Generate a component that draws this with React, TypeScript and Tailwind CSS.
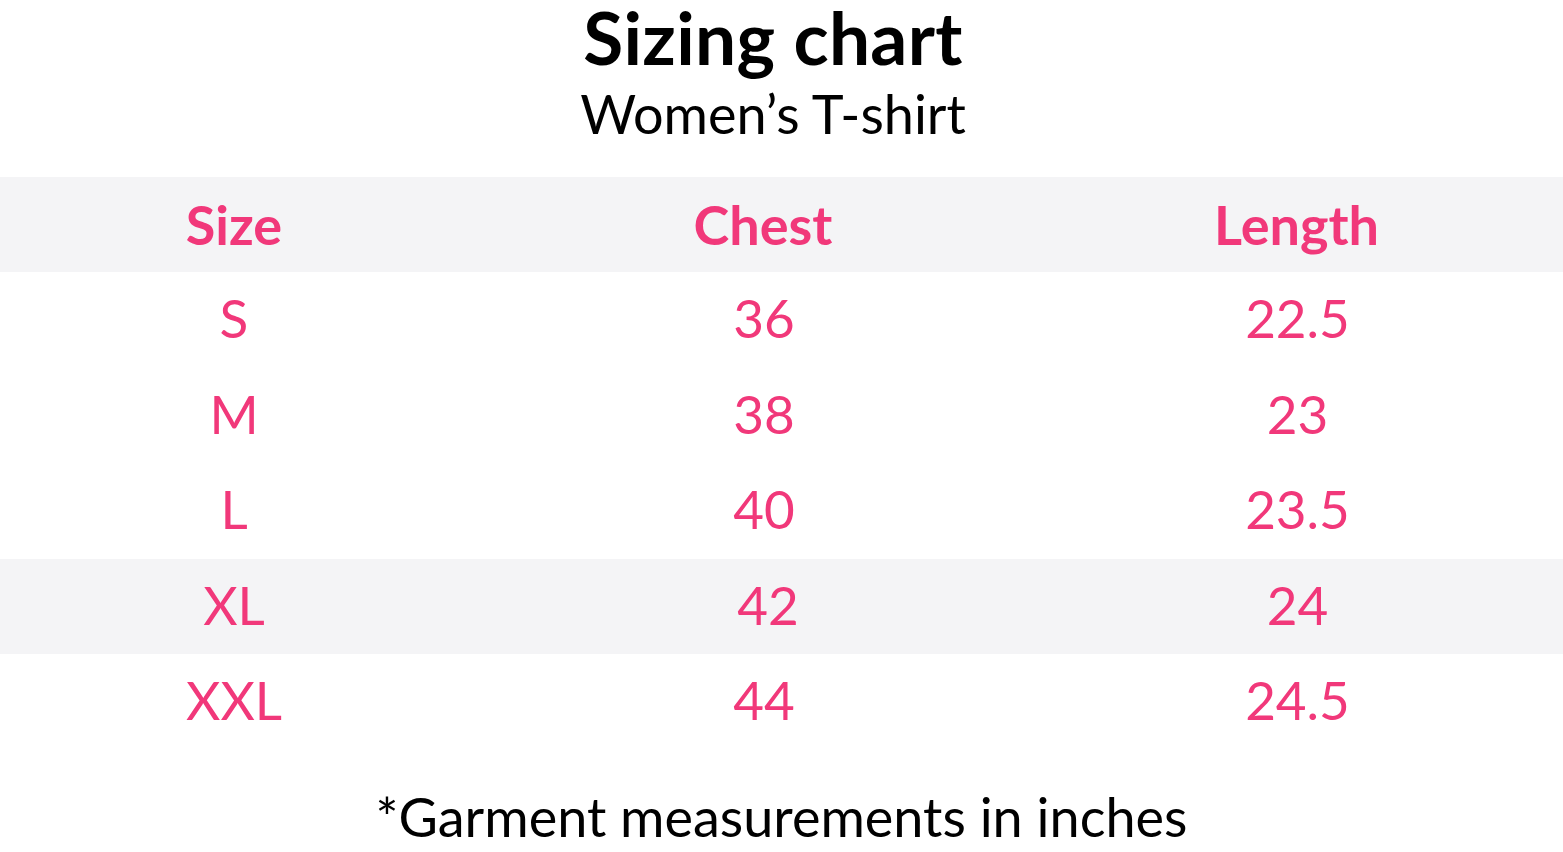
const rows = [
  ['S', '36', '22.5'],
  ['M', '38', '23'],
  ['L', '40', '23.5'],
  ['XL', '42', '24'],
  ['XXL', '44', '24.5'],
];

export default function App() {
  return (
    <div className="w-[1563px] h-[852px] bg-white text-black overflow-hidden" style={{ fontFamily: 'Lato, "Open Sans", sans-serif' }}>
      <div className="flex flex-col items-center pt-[2px] pr-[17px]">
        <h1 className="text-[73px] font-bold leading-[70px] tracking-[0.3px]">Sizing chart</h1>
        <p className="text-[54px] leading-[60px] mt-[12px]">Women’s T-shirt</p>
      </div>
      <div className="mt-[33px] text-[#f1387a]">
        <div className="grid grid-cols-[468px_590px_1fr] h-[95px] items-center bg-[#f4f4f6] text-[54px] font-bold">
          <div className="text-center">Size</div>
          <div className="text-center">Chest</div>
          <div className="text-center pr-[28px]">Length</div>
        </div>
        {rows.map((r, i) => (
          <div
            key={r[0]}
            className={`grid grid-cols-[468px_590px_1fr] h-[95.5px] items-center pb-[4px] text-[53px] ${i === 3 ? 'bg-[#f4f4f6]' : ''}`}
          >
            <div className="text-center">{r[0]}</div>
            <div className={`text-center ${i === 3 ? 'pl-[10px]' : 'pl-[2px]'}`}>{r[1]}</div>
            <div className="text-center pr-[26px]">{r[2]}</div>
          </div>
        ))}
      </div>
      <p className="text-center text-[54px] leading-[60px] mt-[37px]">*Garment measurements in inches</p>
    </div>
  );
}
